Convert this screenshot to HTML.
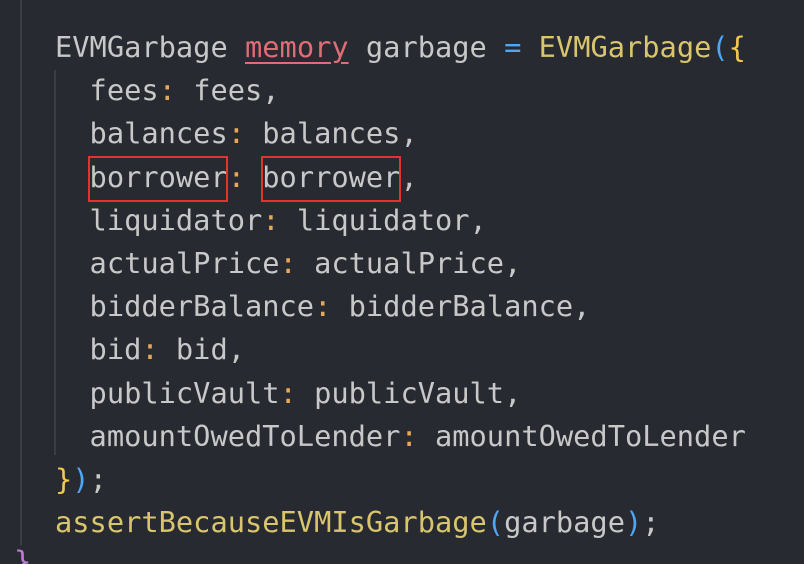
<html style="overflow:hidden;height:564px"><head><style>
body{margin:0;width:804px;height:564px;background:#282a31;overflow:hidden;position:relative}
.g{position:absolute;width:2px;background:#3a3d45}
pre{position:absolute;left:55px;top:26px;margin:0;font-family:"DejaVu Sans Mono","Liberation Mono",monospace;font-size:28.7px;line-height:43.2px;color:#c8c8c8}
.c{color:#e8a85a}.r{color:#e06c75;text-decoration:underline;text-underline-offset:5px}.y{color:#d9c56c}.b{color:#4ea6f5}.k{color:#f2c94c}
.box{position:absolute;border:2px solid #e0342c;height:42px;top:156px}
</style></head><body>
<div class="g" style="left:20px;top:0;height:545px"></div>
<div class="g" style="left:54px;top:70px;height:385px"></div>
<pre>EVMGarbage <span class="r">memory</span> garbage <span class="b">=</span> <span class="y">EVMGarbage</span><span class="b">(</span><span class="k">{</span>
  fees<span class="c">:</span> fees,
  balances<span class="c">:</span> balances,
  borrower<span class="c">:</span> borrower,
  liquidator<span class="c">:</span> liquidator,
  actualPrice<span class="c">:</span> actualPrice,
  bidderBalance<span class="c">:</span> bidderBalance,
  bid<span class="c">:</span> bid,
  publicVault<span class="c">:</span> publicVault,
  amountOwedToLender<span class="c">:</span> amountOwedToLender
<span class="k">}</span><span class="b">)</span>;
<span class="y">assertBecauseEVMIsGarbage</span><span class="b">(</span>garbage<span class="b">)</span>;</pre>
<div style="position:absolute;left:14px;top:540px;font-family:'DejaVu Sans Mono',monospace;font-size:28.7px;line-height:43px;color:#c678dd">}</div>
<div class="box" style="left:88px;width:136px"></div>
<div class="box" style="left:261px;width:136px"></div>
</body></html>
